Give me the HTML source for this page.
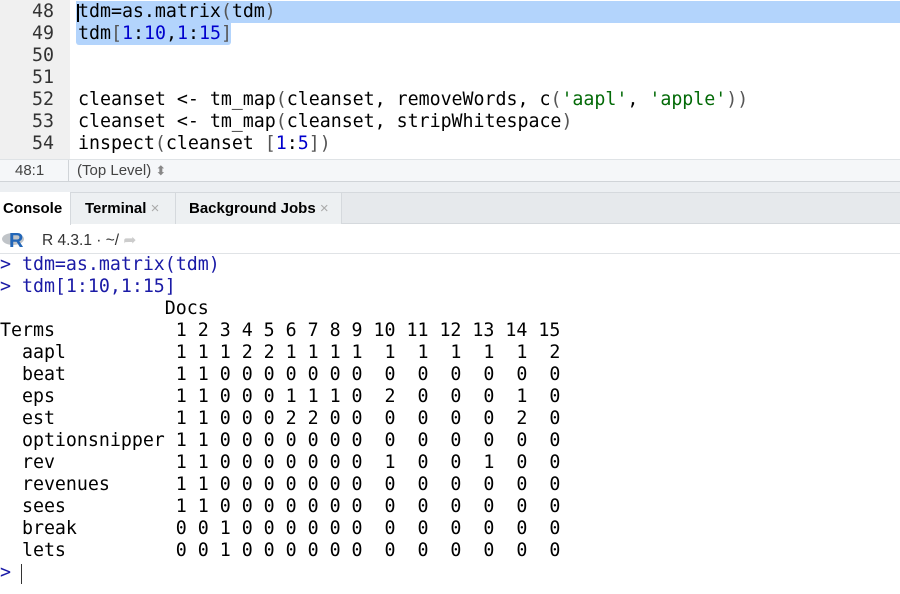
<!DOCTYPE html>
<html><head><style>
*{margin:0;padding:0;box-sizing:border-box}
body{width:900px;height:594px;overflow:hidden;background:#fff;position:relative;font-family:"Liberation Sans",sans-serif}
.m{font-family:"DejaVu Sans Mono","Liberation Mono",monospace;font-size:18.3px;white-space:pre;position:absolute;line-height:22px;letter-spacing:-0.02px}
.ln{position:absolute;left:0;width:70px;text-align:right;padding-right:16px;color:#333;font-family:"DejaVu Sans Mono",monospace;font-size:18.3px;line-height:22px}
.sel{position:absolute;background:#b3d4fc}
.p{color:#555}.n{color:#0000cd}.s{color:#036a07}.b{color:#1a1aa6}
</style></head><body>
<div style="position:absolute;left:0;top:0;width:70px;height:160px;background:#f0f0f0"></div>
<div class="sel" style="left:76px;top:1px;width:824px;height:22px"></div>
<div class="sel" style="left:76px;top:23px;width:155px;height:22px;border-radius:0 0 3px 3px"></div>
<div style="position:absolute;left:77px;top:4px;width:2px;height:18px;background:#000"></div>
<div class="ln" style="top:1px">48</div>
<div class="ln" style="top:23px">49</div>
<div class="ln" style="top:45px">50</div>
<div class="ln" style="top:67px">51</div>
<div class="ln" style="top:89px">52</div>
<div class="ln" style="top:111px">53</div>
<div class="ln" style="top:133px">54</div>
<div class="m" style="left:78px;top:1px">tdm=as.matrix<span class="p">(</span>tdm<span class="p">)</span></div>
<div class="m" style="left:78px;top:23px">tdm<span class="p">[</span><span class="n">1</span>:<span class="n">10</span>,<span class="n">1</span>:<span class="n">15</span><span class="p">]</span></div>
<div class="m" style="left:78px;top:89px">cleanset &lt;- tm_map<span class="p">(</span>cleanset, removeWords, c<span class="p">(</span><span class="s">'aapl'</span>, <span class="s">'apple'</span><span class="p">))</span></div>
<div class="m" style="left:78px;top:111px">cleanset &lt;- tm_map<span class="p">(</span>cleanset, stripWhitespace<span class="p">)</span></div>
<div class="m" style="left:78px;top:133px">inspect<span class="p">(</span>cleanset <span class="p">[</span><span class="n">1</span>:<span class="n">5</span><span class="p">])</span></div>
<div style="position:absolute;left:0;top:159px;width:900px;height:23px;background:#f5f7f9;border-top:1px solid #dfe3e6;border-bottom:1px solid #d0d4d8;font-size:15px;color:#444;line-height:22px">
<span style="position:absolute;left:15px">48:1</span>
<span style="position:absolute;left:68px;top:0;width:1px;height:22px;background:#d0d4d8"></span>
<span style="position:absolute;left:77px">(Top Level) <span style="color:#888;font-size:13px">⬍</span></span></div>
<div style="position:absolute;left:0;top:182px;width:900px;height:10px;background:#eceff2"></div>
<div style="position:absolute;left:0;top:192px;width:900px;height:32px;background:#e6e9ec;border-top:1px solid #d5d9dd;border-bottom:1px solid #d5d9dd"></div>
<div style="position:absolute;left:0;top:192px;width:71px;height:33px;background:#fff;border-right:1px solid #d5d9dd;font-weight:bold;font-size:15px;line-height:34px;padding-left:3px">Console</div>
<div style="position:absolute;left:71px;top:193px;width:105px;height:31px;border-right:1px solid #d5d9dd;font-weight:bold;font-size:15px;line-height:32px;padding-left:14px;background:#edf0f2">Terminal <span style="color:#aaa;font-weight:normal">×</span></div>
<div style="position:absolute;left:176px;top:193px;width:166px;height:31px;border-right:1px solid #d5d9dd;font-weight:bold;font-size:15px;line-height:32px;padding-left:13px;background:#edf0f2">Background Jobs <span style="color:#aaa;font-weight:normal">×</span></div>
<div style="position:absolute;left:0;top:225px;width:900px;height:29px;border-bottom:1px solid #e0e3e6;font-size:15.5px;line-height:32px;color:#333">
<span style="position:absolute;left:2px;top:8px;width:22px;height:12px;border-radius:50%;background:#c0c4c8"></span>
<span style="position:absolute;left:9px;top:4px;font-weight:bold;color:#2266b8;font-size:20px;line-height:24px">R</span>
<span style="position:absolute;left:42px">R 4.3.1 · ~/ <span style="color:#ccc">➦</span></span></div>
<div class="m b" style="left:0;top:254px">&gt; tdm=as.matrix(tdm)
&gt; tdm[1:10,1:15]</div>
<div class="m" style="left:0;top:298px;color:#000">               Docs
Terms           1 2 3 4 5 6 7 8 9 10 11 12 13 14 15
  aapl          1 1 1 2 2 1 1 1 1  1  1  1  1  1  2
  beat          1 1 0 0 0 0 0 0 0  0  0  0  0  0  0
  eps           1 1 0 0 0 1 1 1 0  2  0  0  0  1  0
  est           1 1 0 0 0 2 2 0 0  0  0  0  0  2  0
  optionsnipper 1 1 0 0 0 0 0 0 0  0  0  0  0  0  0
  rev           1 1 0 0 0 0 0 0 0  1  0  0  1  0  0
  revenues      1 1 0 0 0 0 0 0 0  0  0  0  0  0  0
  sees          1 1 0 0 0 0 0 0 0  0  0  0  0  0  0
  break         0 0 1 0 0 0 0 0 0  0  0  0  0  0  0
  lets          0 0 1 0 0 0 0 0 0  0  0  0  0  0  0</div>
<div class="m b" style="left:0;top:562px">&gt; </div>
<div style="position:absolute;left:21px;top:564px;width:1px;height:20px;background:#333"></div>
</body></html>
